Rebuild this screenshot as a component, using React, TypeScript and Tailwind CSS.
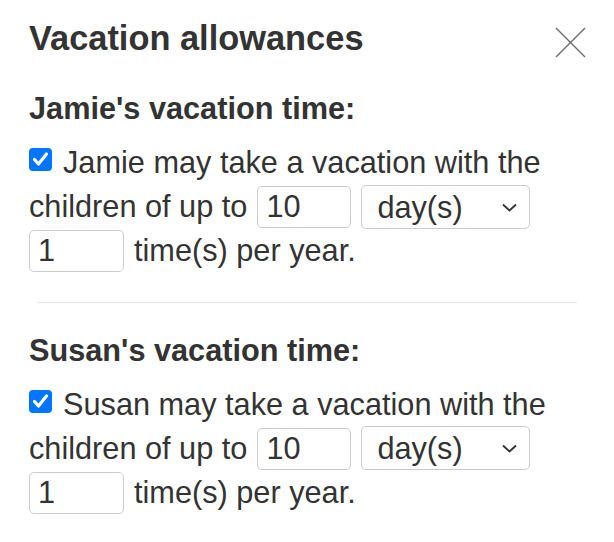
import React from "react";

function Check() {
  return (
    <div className="mb-[7px] flex h-[23px] w-[23px] shrink-0 items-center justify-center rounded-[4px] bg-[#0075ff]">
      <svg width="23" height="23" viewBox="0 0 23 23">
        <polyline points="5.5,11.5 9.5,16 17.5,6" fill="none" stroke="#fff" strokeWidth="3.2" strokeLinecap="round" strokeLinejoin="round" />
      </svg>
    </div>
  );
}

function Section({ name }: { name: string }) {
  return (
    <div>
      <div className="text-[30.7px] font-bold leading-[44px]">{name}'s vacation time:</div>
      <div className="mt-[10px]">
        <div className="flex h-[44px] items-center gap-[11px]">
          <Check />
          <span className="whitespace-nowrap">{name} may take a vacation with the</span>
        </div>
        <div className="flex h-[44px] items-center">
          <span className="whitespace-nowrap">children of up to</span>
          <input
            readOnly
            value="10"
            className="ml-[10px] h-[42px] w-[94px] rounded-[5px] border border-[#cccccc] bg-white px-[8px] text-[30.7px] text-[#333] outline-none"
          />
          <div className="relative ml-[10px]">
            <select
              defaultValue="day"
              className="h-[44px] w-[169px] appearance-none rounded-[5px] border border-[#cccccc] bg-white pl-[15px] text-[30.7px] text-[#333] outline-none"
            >
              <option value="day">day(s)</option>
              <option value="week">week(s)</option>
            </select>
            <svg
              className="pointer-events-none absolute right-[13px] top-[18px]"
              width="15"
              height="9"
              viewBox="0 0 15 9"
            >
              <polyline points="1,1.5 7.5,7.5 14,1.5" fill="none" stroke="#333" strokeWidth="1.9" />
            </svg>
          </div>
        </div>
        <div className="flex h-[44px] items-center">
          <input
            readOnly
            value="1"
            className="h-[42px] w-[95px] rounded-[5px] border border-[#cccccc] bg-white px-[8px] text-[30.7px] text-[#333] outline-none"
          />
          <span className="ml-[10px] whitespace-nowrap">time(s) per year.</span>
        </div>
      </div>
    </div>
  );
}

export default function App() {
  return (
    <div className="h-[542px] w-[614px] overflow-hidden bg-white pl-[29px] pr-[28px] pt-[20px] font-['Liberation_Sans',Arial,sans-serif] text-[30.7px] leading-[44px] text-[#333]">
      <div className="flex items-start justify-between">
        <h4 className="text-[34.4px] font-bold leading-[37.4px]">Vacation allowances</h4>
        <svg className="mt-[7px]" width="31" height="31" viewBox="0 0 31 31">
          <line x1="1" y1="1" x2="30" y2="30" stroke="#6f6f6f" strokeWidth="1.5" />
          <line x1="30" y1="1" x2="1" y2="30" stroke="#6f6f6f" strokeWidth="1.5" />
        </svg>
      </div>
      <div className="mt-[29px]">
        <Section name="Jamie" />
      </div>
      <div className="mx-[9px] mt-[28.6px] h-px bg-[#e5e5e5]" />
      <div className="mt-[26.4px]">
        <Section name="Susan" />
      </div>
    </div>
  );
}
